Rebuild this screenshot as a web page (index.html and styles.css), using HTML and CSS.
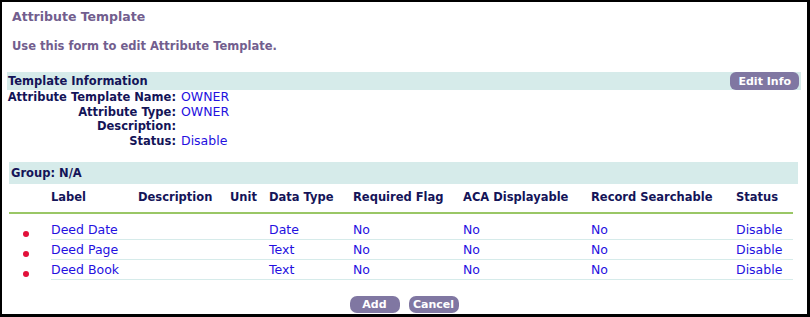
FILE: index.html
```html
<!DOCTYPE html>
<html lang="en">
<head>
    <meta charset="UTF-8">
    <title>Attribute Template</title>
    <link rel="stylesheet" href="styles.css">
</head>
<body>
    <div class="frame">
        <h1 class="title">Attribute Template</h1>
        <p class="intro">Use this form to edit Attribute Template.</p>

        <div class="bar info-bar">
            <span>Template Information</span>
            <button class="pill">Edit Info</button>
        </div>
        <div class="fields">
            <span class="field-label">Attribute Template Name:</span><span class="field-value">OWNER</span>
            <span class="field-label">Attribute Type:</span><span class="field-value">OWNER</span>
            <span class="field-label">Description:</span><span class="field-value"></span>
            <span class="field-label">Status:</span><span class="field-value">Disable</span>
        </div>

        <div class="bar group-bar">Group: N/A</div>
        <table class="grid">
            <colgroup>
                <col style="width: 42px">
                <col style="width: 87px">
                <col style="width: 92px">
                <col style="width: 39px">
                <col style="width: 84px">
                <col style="width: 110px">
                <col style="width: 128px">
                <col style="width: 145px">
                <col style="width: 57px">
            </colgroup>
            <thead>
                <tr>
                    <th></th>
                    <th>Label</th>
                    <th>Description</th>
                    <th>Unit</th>
                    <th>Data Type</th>
                    <th>Required Flag</th>
                    <th>ACA Displayable</th>
                    <th>Record Searchable</th>
                    <th>Status</th>
                </tr>
            </thead>
            <tbody>
                <tr class="first">
                    <td class="dot-cell"><span class="dot"></span></td>
                    <td>Deed Date</td><td></td><td></td><td>Date</td><td>No</td><td>No</td><td>No</td><td>Disable</td>
                </tr>
                <tr>
                    <td class="dot-cell"><span class="dot"></span></td>
                    <td>Deed Page</td><td></td><td></td><td>Text</td><td>No</td><td>No</td><td>No</td><td>Disable</td>
                </tr>
                <tr>
                    <td class="dot-cell"><span class="dot"></span></td>
                    <td>Deed Book</td><td></td><td></td><td>Text</td><td>No</td><td>No</td><td>No</td><td>Disable</td>
                </tr>
            </tbody>
        </table>

        <div class="actions">
            <button class="pill wide">Add</button>
            <button class="pill wide">Cancel</button>
        </div>
    </div>
</body>
</html>
```

FILE: styles.css
```css
body {
    margin: 0;
    font-family: Verdana, "DejaVu Sans", sans-serif;
    background: #fff;
}
.frame {
    box-sizing: border-box;
    height: 317px;
    border-style: solid;
    border-color: #000;
    border-width: 2px 3px 3px 2px;
    padding: 0 6px 0 5px;
}
.title {
    margin: 0;
    padding: 7px 0 0 5px;
    font-size: 12.5px;
    line-height: 16px;
    color: #725e8e;
}
.intro {
    margin: 13px 0 0 5px;
    font-size: 11.5px;
    line-height: 16px;
    font-weight: bold;
    color: #725e8e;
}
.bar {
    background: #d6ebea;
    color: #141458;
    font-weight: bold;
    font-size: 11.5px;
}
.info-bar {
    margin-top: 18px;
    height: 18px;
    display: flex;
    align-items: center;
    justify-content: space-between;
    padding-left: 1px;
}
.pill {
    border: none;
    background: #8077a2;
    color: #fff;
    font-family: inherit;
    font-weight: bold;
    font-size: 11px;
    border-radius: 6px;
    height: 18px;
    padding: 0 8px;
    cursor: pointer;
}
.info-bar .pill {
    margin-right: 2px;
}
.fields {
    display: grid;
    grid-template-columns: 169px auto;
    column-gap: 5px;
    font-size: 11.5px;
    line-height: 14.5px;
}
.field-label {
    text-align: right;
    font-weight: bold;
    color: #141458;
    white-space: nowrap;
}
.field-value {
    color: #2410e0;
    font-size: 12.5px;
}
.group-bar {
    margin: 14px 3px 0 2px;
    height: 22px;
    line-height: 22px;
    padding-left: 2px;
}
.grid {
    margin-left: 2px;
    border-collapse: collapse;
    table-layout: fixed;
    width: 784px;
}
.grid th {
    text-align: left;
    font-size: 11.5px;
    color: #141458;
    height: 26px;
    padding: 0 0 2px 0;
    border-bottom: 2px solid #9ac766;
    white-space: nowrap;
}
.grid td {
    font-size: 12.5px;
    line-height: 16px;
    color: #2410e0;
    padding: 2px 0 1px 0;
    border-bottom: 1px solid #d6ebea;
    white-space: nowrap;
}
.grid td.dot-cell {
    border-bottom: none;
    padding-left: 14px;
}
.grid tr.first td {
    padding-top: 8px;
}
.dot {
    display: block;
    width: 6px;
    height: 6px;
    margin-top: 8px;
    border-radius: 50%;
    background: #e2103a;
}
.actions {
    display: flex;
    justify-content: center;
    gap: 9px;
    margin-top: 16px;
}
.pill.wide {
    width: 50px;
    height: 17px;
    padding: 0;
    border-radius: 7px;
}
```
